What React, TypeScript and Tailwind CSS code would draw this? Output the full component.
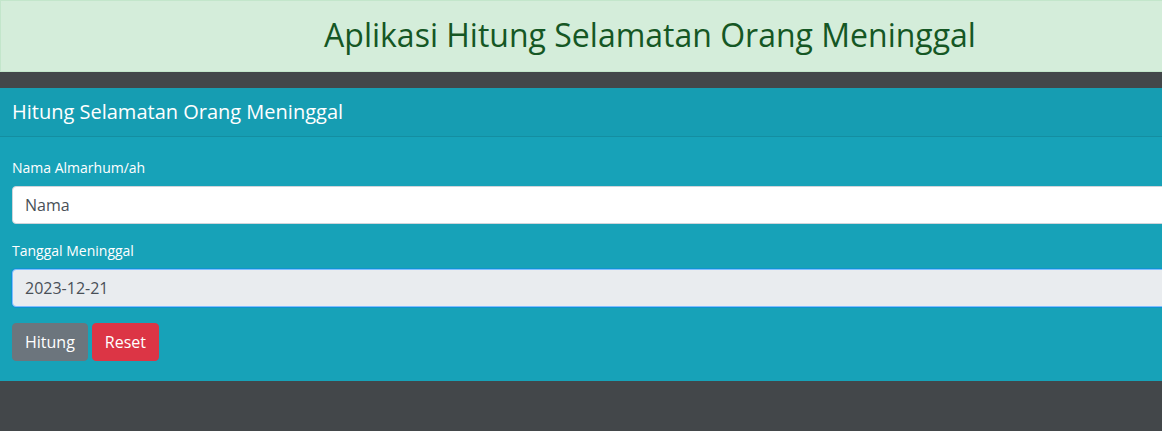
import React from "react";

export default function App() {
  return (
    <div className="w-[1162px] h-[431px] overflow-hidden bg-[#43474a]" style={{ fontFamily: '"Open Sans", sans-serif' }}>
      <div className="w-[1300px]">
        <div className="h-[72px] bg-[#d4edda] border border-[#c3e6cb] flex items-center justify-center">
          <h1 className="text-[32px] leading-[38px] text-[#155724] font-normal pb-[2px]">Aplikasi Hitung Selamatan Orang Meninggal</h1>
        </div>
        <div className="mt-4 bg-[#17a2b8] text-white">
          <div className="h-[49px] bg-[#169db2] border-b border-[#148ea1] px-3 flex items-center">
            <span className="text-[20px] leading-6">Hitung Selamatan Orang Meninggal</span>
          </div>
          <div className="px-3 pt-5 pb-5">
            <div className="mb-4">
              <label className="block text-[14px] leading-[21px] mb-2">Nama Almarhum/ah</label>
              <div className="h-[38px] bg-white border border-[#ced4da] rounded-[4px] px-3 flex items-center text-[16px] text-[#495057]">Nama</div>
            </div>
            <div className="mb-4">
              <label className="block text-[14px] leading-[21px] mb-2">Tanggal Meninggal</label>
              <div className="h-[38px] bg-[#e9ecef] border border-[#80bdff] rounded-[4px] px-3 flex items-center text-[16px] text-[#495057] shadow-[0_0_0_1px_rgba(0,123,255,0.35)]">2023-12-21</div>
            </div>
            <div className="flex gap-1">
              <button className="h-[38px] px-3 rounded-[4px] bg-[#6c757d] border border-[#6c757d] text-white text-[16px]">Hitung</button>
              <button className="h-[38px] px-3 rounded-[4px] bg-[#dc3545] border border-[#dc3545] text-white text-[16px]">Reset</button>
            </div>
          </div>
        </div>
      </div>
    </div>
  );
}
